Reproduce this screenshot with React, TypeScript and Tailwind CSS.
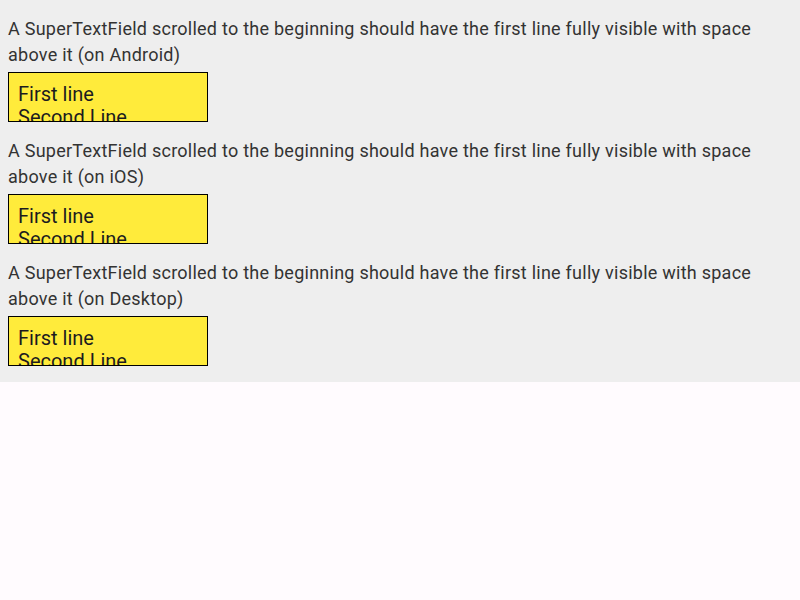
import React from 'react';

// ─── Test case sections ───────────────────────────────────────────────────────

const platforms = ['Android', 'iOS', 'Desktop'];

const ScrolledField: React.FC = () => (
  <div className="mt-1 h-[50px] w-[200px] overflow-hidden border border-black bg-[#ffeb3b] pl-[9px] pt-[10px] text-[20px] leading-[23px] text-[#1c1b1f]">
    <div>First line</div>
    <div>Second Line</div>
  </div>
);

const Section: React.FC<{ platform: string }> = ({ platform }) => (
  <div className="pt-4">
    <p className="text-[18px] leading-[26px] tracking-[0.25px] text-[#333333]">
      A SuperTextField scrolled to the beginning should have the first line fully visible with space
      above it (on {platform})
    </p>
    <ScrolledField />
  </div>
);

export default function App() {
  return (
    <div
      className="min-h-[600px] w-[800px] bg-[#fffbfe]"
      style={{ fontFamily: 'Roboto, "Noto Sans", sans-serif' }}
    >
      <div className="bg-[#eeeeee] px-2 pb-4">
        {platforms.map((p) => (
          <Section key={p} platform={p} />
        ))}
      </div>
    </div>
  );
}
